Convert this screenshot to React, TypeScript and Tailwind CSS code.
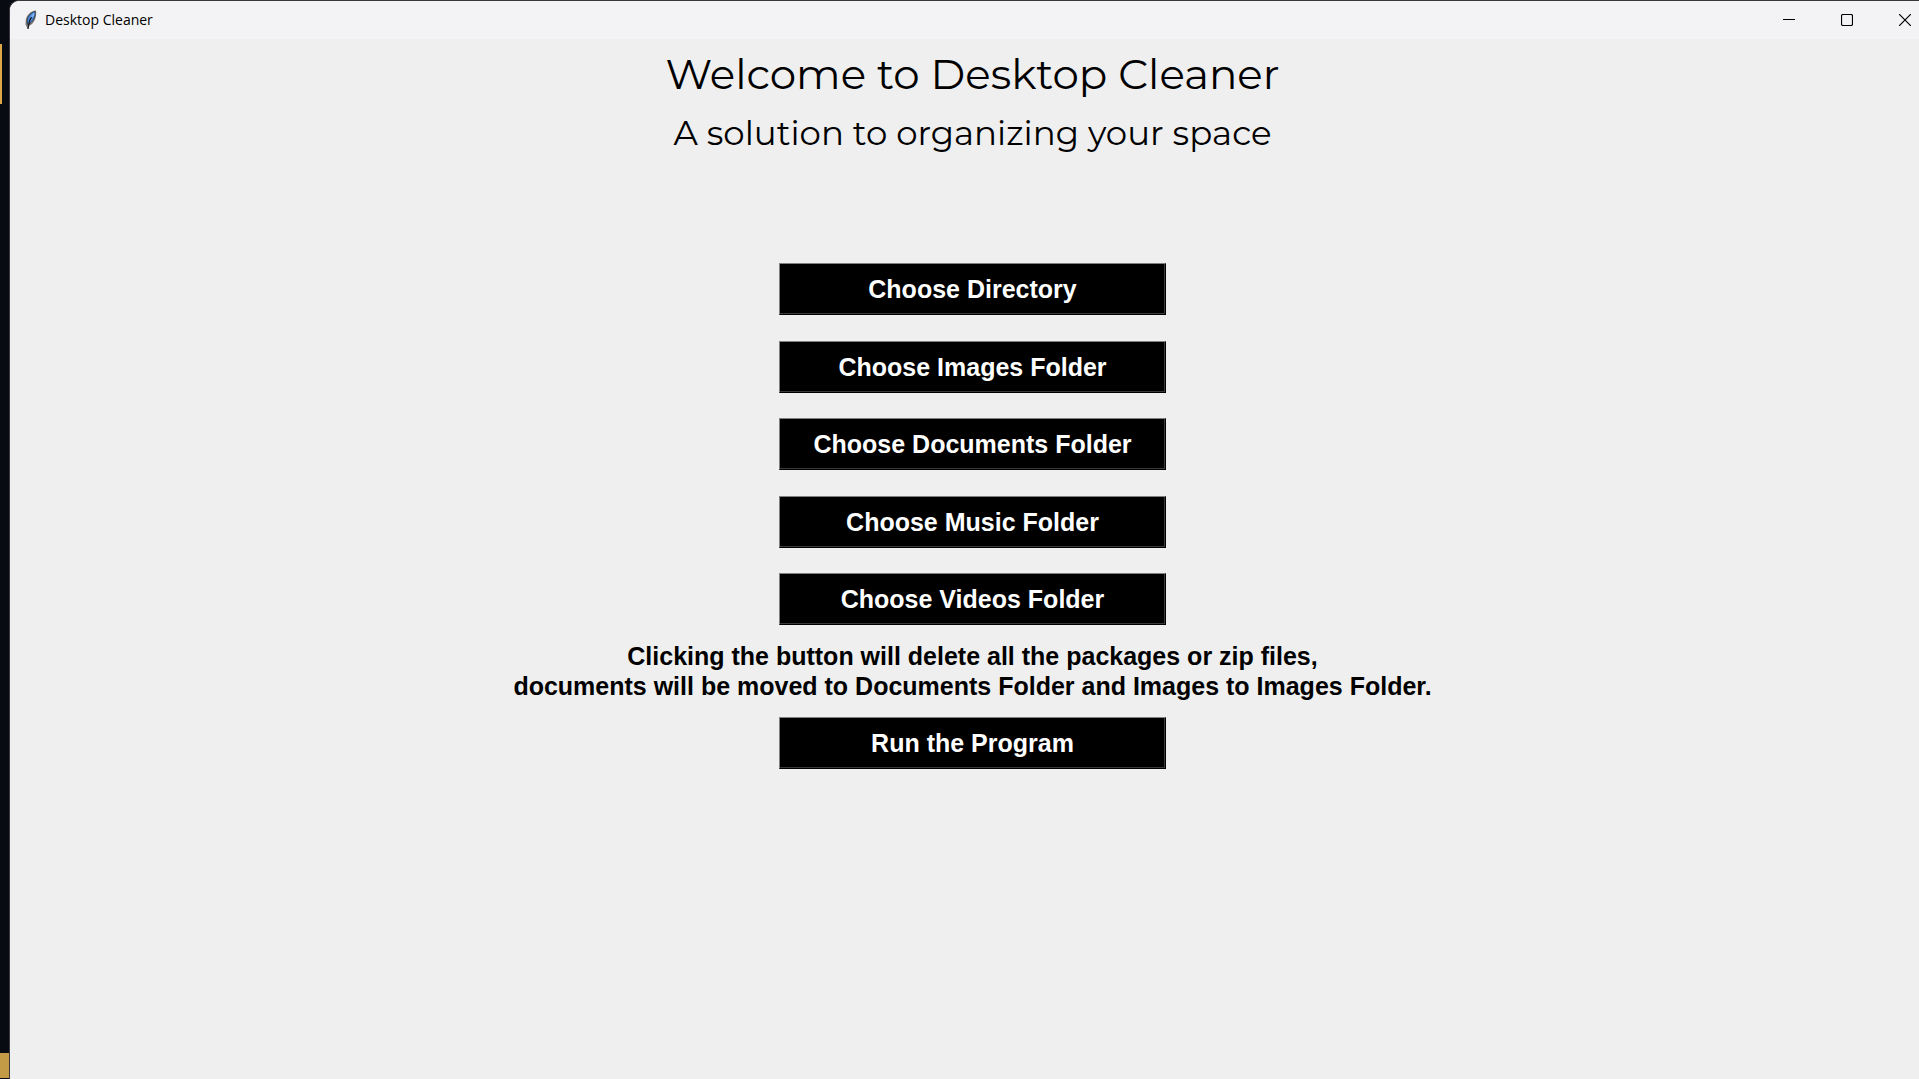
const folderButtons = [
  "Choose Directory",
  "Choose Images Folder",
  "Choose Documents Folder",
  "Choose Music Folder",
  "Choose Videos Folder",
];

function ActionButton({ label }: { label: string }) {
  return (
    <button
      type="button"
      className="h-[52px] w-[387px] border border-t-[#808080] border-l-[#808080] border-r-black border-b-black bg-black text-[25px] leading-[30px] font-bold text-white shadow-[inset_-1px_-1px_0_#3a3a3a]"
    >
      {label}
    </button>
  );
}

function FeatherIcon() {
  return (
    <svg width="12" height="20" viewBox="0 0 12 20" aria-hidden="true">
      <path d="M11 .5C6 .8 1.500 5 .8 10L.5 14.500 2.800 19l1-3C9 14 12 7 11 .5Z" fill="#77736e" />
      <path d="M10 1.500C6 2.500 2.500 6 2 11L2.800 14.500C8 12 10.700 7 10 1.500Z" fill="#4a86d8" stroke="#25303f" strokeWidth=".7" />
      <path d="M9.500 2.500C7 4 5.500 6.500 5 9L9 6Z" fill="#79b4f5" />
      <path d="M6.500 7 4.500 11 3 19" fill="none" stroke="#16181d" strokeWidth="1.200" />
    </svg>
  );
}

function TitleBar() {
  const control = "flex h-full w-[58px] items-center justify-center";
  return (
    <header className="flex h-[38px] items-center bg-[#f3f3f6] text-black">
      <div className="flex flex-1 items-center gap-2 pl-[15px]">
        <FeatherIcon />
        <span className="font-['Open_Sans','Noto_Sans',sans-serif] text-[14px] leading-5">Desktop Cleaner</span>
      </div>
      <div className="flex h-full pr-px">
        <button type="button" aria-label="Minimize" className={control}>
          <svg width="12" height="12" viewBox="0 0 12 12"><path d="M0 5.500H12" stroke="currentColor" /></svg>
        </button>
        <button type="button" aria-label="Maximize" className={control}>
          <svg width="12" height="12" viewBox="0 0 12 12"><rect x=".5" y=".5" width="11" height="11" rx="1.500" fill="none" stroke="currentColor" strokeWidth="1.200" /></svg>
        </button>
        <button type="button" aria-label="Close" className={control}>
          <svg width="12" height="12" viewBox="0 0 12 12"><path d="M0 0 12 12M12 0 0 12" stroke="currentColor" strokeWidth="1.200" /></svg>
        </button>
      </div>
    </header>
  );
}

export default function App() {
  return (
    <div className="flex h-screen overflow-hidden bg-[#080b11]">
      <aside className="flex w-[9px] shrink-0 flex-col">
        <div className="mt-11 h-[60px] w-[2px] bg-[#dfa846]" />
        <div className="mt-auto mb-px h-[25px] bg-[#c39a46]" />
      </aside>
      <div className="-mr-4 flex min-w-0 flex-1 flex-col overflow-hidden rounded-tl-[10px] border-t border-l border-[#39373d] bg-[#efefef]">
        <TitleBar />
        <main className="flex flex-1 flex-col items-center font-['Liberation_Sans',Arial,sans-serif] text-black">
          <h1 className="mt-[7px] font-['Montserrat','Inter',sans-serif] text-[42px] leading-[56px] font-normal">Welcome to Desktop Cleaner</h1>
          <p className="mt-[5px] font-['Montserrat','Inter',sans-serif] text-[34px] leading-[52px] font-normal">A solution to organizing your space</p>
          <div className="mt-[104px] flex h-[362px] flex-col justify-between">
            {folderButtons.map((label) => (
              <ActionButton key={label} label={label} />
            ))}
          </div>
          <p className="my-4 text-center text-[25px] leading-[30px] font-bold">
            Clicking the button will delete all the packages or zip files,
            <br />
            documents will be moved to Documents Folder and Images to Images Folder.
          </p>
          <ActionButton label="Run the Program" />
        </main>
      </div>
    </div>
  );
}
